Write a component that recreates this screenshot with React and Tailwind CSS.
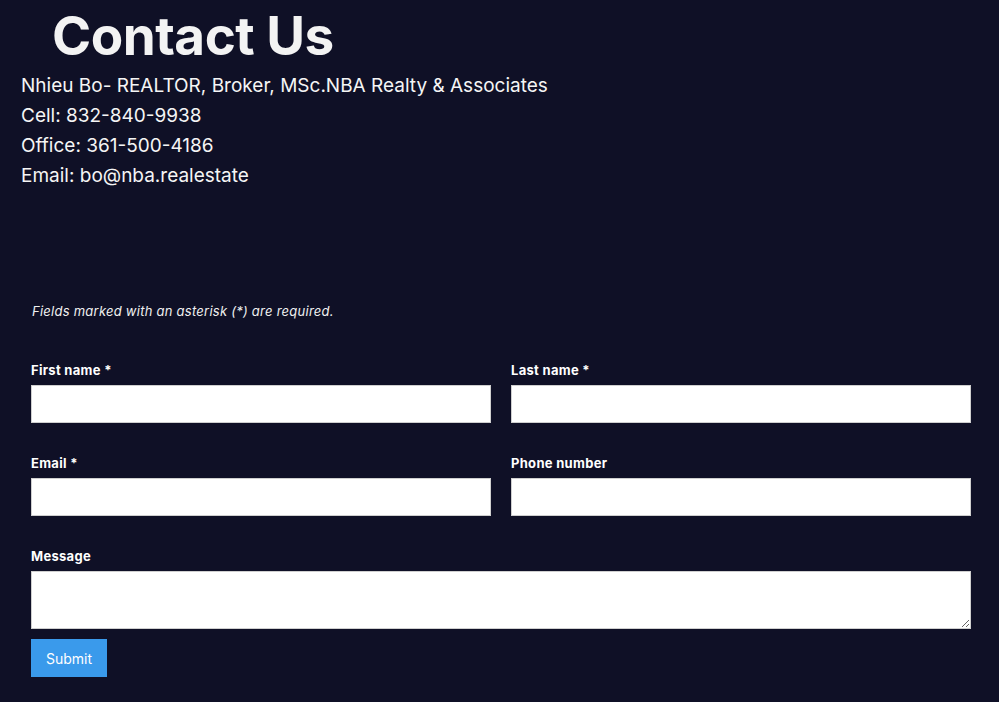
import React from 'react';

const inputClass = 'block w-full h-[38px] bg-white border border-[#cfcfcf] px-2 text-sm text-gray-900 outline-none';

const Field = ({ label, children }) => (
  <div className="flex flex-col">
    <label className="text-[13px] font-bold text-white leading-[18px] tracking-[0.3px] mb-[6px]">{label}</label>
    {children}
  </div>
);

const App = () => {
  return (
    <div className="min-h-[702px] w-full bg-[#0f1026] text-white font-['Inter','Liberation_Sans',sans-serif] overflow-hidden">
      <h1 className="pl-[52px] pt-[10px] text-[53px] font-bold leading-[53px] tracking-[-0.5px] text-[#f3f3f3]">Contact Us</h1>

      <div className="pl-[21px] mt-[8px] text-[19px] leading-[30px] text-[#f5f5f5]">
        <p>Nhieu Bo- REALTOR, Broker, MSc.NBA Realty &amp; Associates</p>
        <p>Cell: 832-840-9938</p>
        <p>Office: 361-500-4186</p>
        <p>Email: bo@nba.realestate</p>
      </div>

      <form className="pl-[31px] pr-[28px] mt-[111px]" onSubmit={(e) => e.preventDefault()}>
        <p className="pl-[1px] text-[13px] italic leading-[18px] tracking-[0.25px] text-[#f0f0f0]">
          Fields marked with an asterisk (*) are required.
        </p>

        <div className="mt-[41px] grid grid-cols-2 gap-x-[20px] gap-y-[31px]">
          <Field label="First name *">
            <input type="text" className={inputClass} />
          </Field>
          <Field label="Last name *">
            <input type="text" className={inputClass} />
          </Field>
          <Field label="Email *">
            <input type="email" className={inputClass} />
          </Field>
          <Field label="Phone number">
            <input type="tel" className={inputClass} />
          </Field>
        </div>

        <div className="mt-[31px]">
          <Field label="Message">
            <textarea className="block w-full h-[58px] bg-white border border-[#cfcfcf] px-2 py-1 text-sm text-gray-900 outline-none" />
          </Field>
        </div>

        <button
          type="submit"
          className="mt-[10px] h-[38px] w-[76px] bg-[#3a9aeb] text-[14px] text-white"
        >
          Submit
        </button>
      </form>
    </div>
  );
};

export default App;
